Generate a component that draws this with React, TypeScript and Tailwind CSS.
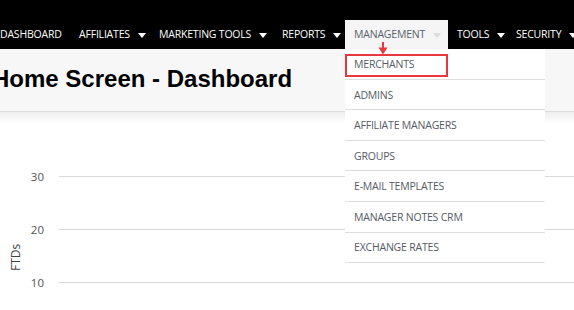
import { type ReactNode } from 'react';

const navItems = [
  { label: 'DASHBOARD', caret: false, width: 'w-[79px]' },
  { label: 'AFFILIATES', caret: true, width: 'w-[80px]' },
  { label: 'MARKETING TOOLS', caret: true, width: 'w-[123px]' },
  { label: 'REPORTS', caret: true, width: 'w-[72px]' },
  { label: 'MANAGEMENT', caret: true, width: 'w-[103px]', active: true },
  { label: 'TOOLS', caret: true, width: 'w-[59px]' },
  { label: 'SECURITY', caret: true, width: 'w-[80px]' },
];

const menuItems = [
  'MERCHANTS',
  'ADMINS',
  'AFFILIATE MANAGERS',
  'GROUPS',
  'E-MAIL TEMPLATES',
  'MANAGER NOTES CRM',
  'EXCHANGE RATES',
];

function Caret({ className }: { className: string }) {
  return (
    <svg className={className} width="8" height="5" viewBox="0 0 8 5">
      <path d="M0 0h8L4 5z" fill="currentColor" />
    </svg>
  );
}

function NavItem({
  label,
  caret,
  width,
  active,
}: {
  label: string;
  caret: boolean;
  width: string;
  active?: boolean;
}) {
  return (
    <div
      className={`flex items-center shrink-0 pl-[9px] ${width} ${
        active ? 'bg-[#f5f5f5] text-[#5a5f6b]' : 'text-white'
      }`}
    >
      <span className="whitespace-nowrap">{label}</span>
      {caret && <Caret className={`ml-[8px] mt-[1px] shrink-0 ${active ? 'text-[#dcdcdc]' : 'text-white'}`} />}
    </div>
  );
}

function GridRow({ label, children }: { label: string; children?: ReactNode }) {
  return (
    <div className="flex items-center h-[53px]">
      <span className="w-[44px] text-right text-[11.5px] text-[#555]">{label}</span>
      <div className="flex-1 ml-[15px] h-px bg-[#d9d9d9]" />
      {children}
    </div>
  );
}

export default function App() {
  return (
    <div className="relative w-[574px] h-[310px] overflow-hidden bg-white font-['Open_Sans',sans-serif]">
      <div className="bg-black h-[49px] pt-[20px] flex text-[10.5px] tracking-[-0.2px] ml-[-9px]">
        {navItems.map((item) => (
          <NavItem key={item.label} {...item} />
        ))}
      </div>

      <div className="h-[63px] bg-[#f7f7f7] border-b border-[#dcdcdc] flex items-center">
        <h1 className="ml-[-8px] mt-[-2px] text-[24px] font-bold text-black font-['Liberation_Sans',Arial,sans-serif]">
          Home Screen - Dashboard
        </h1>
      </div>
      <div className="h-[12px] bg-gradient-to-b from-[#efefef] to-white" />

      <div className="flex">
        <div className="w-0 relative">
          <span className="absolute left-[16px] top-[138px] -rotate-90 origin-left text-[12px] text-[#444] whitespace-nowrap">
            FTDs
          </span>
        </div>
        <div className="flex-1 pt-[26px]">
          <GridRow label="30" />
          <GridRow label="20" />
          <GridRow label="10" />
        </div>
      </div>

      <div className="absolute left-[345px] top-[49px] w-[200px] bg-white">
        {menuItems.map((item) => (
          <div
            key={item}
            className="h-[30.6px] flex items-center pl-[9px] pt-[2px] border-b border-[#dddddd] text-[10.5px] tracking-[-0.2px] text-[#555a66]"
          >
            {item}
          </div>
        ))}
      </div>

      <div className="absolute left-[345px] top-[54px] w-[103px] h-[23px] border-2 border-[#e8383d]" />
      <svg className="absolute left-[378px] top-[42px]" width="10" height="13" viewBox="0 0 10 13">
        <path d="M5 0v7" stroke="#e8383d" strokeWidth="2" />
        <path d="M0.5 5.5h9l-4.5 7z" fill="#e8383d" />
      </svg>
    </div>
  );
}
